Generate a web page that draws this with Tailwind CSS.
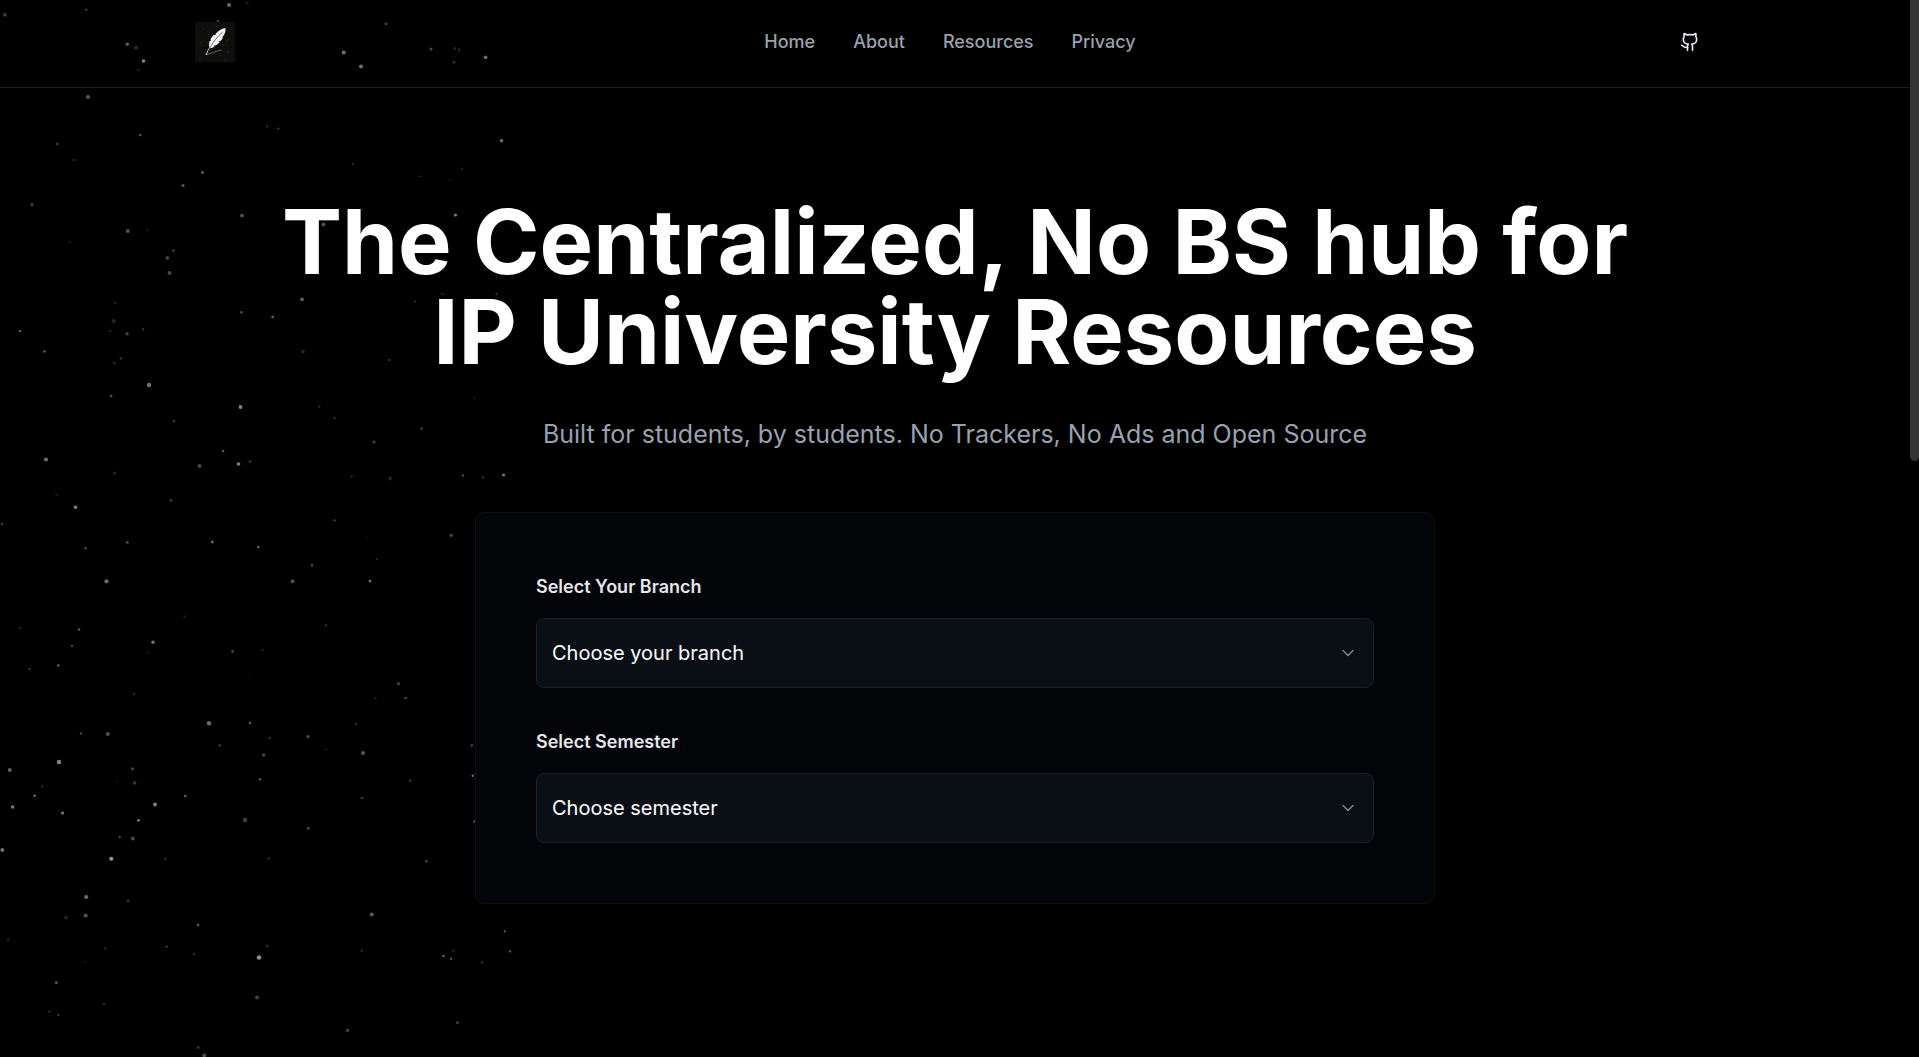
<!DOCTYPE html>
<html lang="en">
<head>
<meta charset="utf-8">
<meta name="viewport" content="width=device-width, initial-scale=1">
<title>IP University Resources</title>
<script src="https://cdn.jsdelivr.net/npm/@tailwindcss/browser@4"></script>
</head>
<body class="bg-black text-white font-['Inter',sans-serif] antialiased">
<div class="relative isolate min-h-screen overflow-hidden pr-[9px]">

  <!-- starfield -->
  <svg id="stars" class="absolute inset-0 -z-10 h-full w-full" aria-hidden="true" fill="#fff"></svg>

  <header class="h-[88px] border-b border-[#1b1c26] pb-[3px]">
    <div class="mx-auto flex h-full w-full max-w-[1520px] items-center justify-between">
      <a href="#" aria-label="Home page">
        <svg class="block size-10" viewBox="0 0 40 40" aria-hidden="true">
          <rect width="40" height="40" fill="#0e0e0d"/>
          <g fill="#2a2a2a"><circle cx="8" cy="7" r=".7"/><circle cx="33" cy="30" r=".8"/><circle cx="5" cy="36" r=".8"/><circle cx="19" cy="3" r=".5"/></g>
          <path d="M5 21.500l3-2M31 19l4-2.500M29 39.500l3-1.500" stroke="#2a2a2a" stroke-width=".8" fill="none"/>
          <path d="M30.500 6C26 6.800 22.800 9 20.500 12l.2 1.300-1.700-.5c-2 2.200-3.300 3.700-3.500 5.200l.8 1-1.500-.2C14 21.500 13.700 24 14.500 26c2.500.4 4-.6 5-1.700l-.6-1 1.600.3c1.800-1 3.200-2.200 4-3.600l-1-.8 1.800.1c1.400-1.400 2.300-2.900 2.700-4.300l-1-.6 1.500-.4C30 11.500 30.600 9 30.500 6z" fill="#f2f2f2"/>
          <path d="M27.500 10C22 15 18 20.500 14.500 26" stroke="#555" stroke-width=".8" fill="none"/>
          <path d="M14.500 26c-1.500 2-2.500 4-3.200 6.300" stroke="#bbb" stroke-width="1" fill="none"/>
          <path d="M11 32c5 .3 8-2.800 16-4" stroke="#777" stroke-width=".8" fill="none"/>
          <circle cx="11.500" cy="32.200" r="1" fill="#aaa"/>
        </svg>
      </a>
      <nav aria-label="Main" class="flex gap-[38px] text-[18px] leading-6 font-medium text-gray-400">
        <a href="#">Home</a>
        <a href="#">About</a>
        <a href="#">Resources</a>
        <a href="#">Privacy</a>
      </nav>
      <a href="#" aria-label="GitHub" class="flex h-11 w-[50px] items-center justify-center text-gray-200">
        <svg class="size-5" viewBox="0 0 24 24" fill="none" stroke="currentColor" stroke-width="2" stroke-linecap="round" stroke-linejoin="round" aria-hidden="true"><path d="M15 22v-4a4.800 4.800 0 0 0-1-3.500c3 0 6-2 6-5.500.08-1.250-.27-2.480-1-3.500.28-1.150.28-2.350 0-3.500 0 0-1 0-3 1.500-2.640-.5-5.360-.5-8 0C6 2 5 2 5 2c-.3 1.150-.3 2.350 0 3.500A5.403 5.403 0 0 0 4 9c0 3.500 3 5.500 6 5.500-.39.49-.68 1.050-.85 1.650-.17.6-.22 1.230-.15 1.850v4"/><path d="M9 18c-4.510 2-5-2-7-2"/></svg>
      </a>
    </div>
  </header>

  <main class="mx-auto flex max-w-[1400px] flex-col items-center pt-[109px] pb-20 text-center">
    <h1 class="text-[90px] leading-[90px] font-bold">The Centralized, No BS hub for<br>IP University Resources</h1>
    <p class="mt-10 text-[25px] leading-[35px] text-gray-400">Built for students, by students. No Trackers, No Ads and Open Source</p>

    <form class="mt-[60px] w-full max-w-[960px] rounded-[10px] border border-[#0c0f16] bg-[#030408] p-[60px] text-left">
      <div>
        <label for="branch" class="block text-[18px] leading-[27px] font-semibold text-gray-200">Select Your Branch</label>
        <div class="relative mt-[18px]">
          <select id="branch" class="block h-[70px] w-full appearance-none rounded-lg border border-[#18202a] bg-[#0a0e15] px-[15px] text-[20px] text-white">
            <option>Choose your branch</option>
          </select>
          <svg class="pointer-events-none absolute inset-y-0 right-4 my-auto size-5 text-[#84878b]" viewBox="0 0 24 24" fill="none" stroke="currentColor" stroke-width="1.700" stroke-linecap="round" stroke-linejoin="round" aria-hidden="true"><path d="m6 9 6 6 6-6"/></svg>
        </div>
      </div>
      <div class="mt-10">
        <label for="semester" class="block text-[18px] leading-[27px] font-semibold text-gray-200">Select Semester</label>
        <div class="relative mt-[18px]">
          <select id="semester" class="block h-[70px] w-full appearance-none rounded-lg border border-[#18202a] bg-[#0a0e15] px-[15px] text-[20px] text-white">
            <option>Choose semester</option>
          </select>
          <svg class="pointer-events-none absolute inset-y-0 right-4 my-auto size-5 text-[#84878b]" viewBox="0 0 24 24" fill="none" stroke="currentColor" stroke-width="1.700" stroke-linecap="round" stroke-linejoin="round" aria-hidden="true"><path d="m6 9 6 6 6-6"/></svg>
        </div>
      </div>
    </form>
  </main>

  <!-- scroll position indicator -->
  <div class="absolute top-0 right-0 h-[461px] w-[9px] rounded-b-full bg-[#333]" aria-hidden="true"></div>
</div>

<script>
// Each star: x, y, radius, opacity
const stars = [
[4.8,14.8,2,.22],[86.3,9.8,1.4,.22],[229,5,2,.4],[247.3,3.3,1.4,.12],[217.8,21,1.2,.28],[127.3,44.3,1.8,.35],[136,47.700,2,.17],[143.500,61,1.800,.5],[138.500,70.300,1.200,.12],[386,24,1.400,.25],[343.700,52.600,2,.42],[361,66.600,2,.45],[431,49,1.500,.28],[454.600,48.600,1.500,.15],[459,49.700,1.200,.18],[454,62.300,1.200,.22],[485.600,57.300,1.900,.42],
[88,97,2,.35],[57.300,144,1.400,.22],[140.300,135,1.200,.35],[73.800,160,1.300,.14],[267,126.500,1,.22],[278.500,128.700,1.100,.25],[501.500,140.700,1.800,.42],[353,164,1.200,.14],[462,168.700,1.200,.12],[419.500,176.300,1,.15],[450,180.500,1,.1],[202.500,172.500,1.300,.45],[183,185.500,1.600,.35],[32,204.600,1.600,.25],[242,215.600,1.900,.33],[455.500,215,1.500,.5],[323.500,224.500,1.900,.3],[127.800,231,2,.33],[147.300,229.800,1.300,.1],[69.500,242,1,.16],[173.600,250.700,1.600,.2],[167.300,258,1.900,.25],
[169.500,273,1.900,.28],[115.300,303,1,.2],[113.600,321,2,.16],[110.300,331,1.200,.14],[127,333.700,1.800,.25],[143,329.300,1.200,.2],[20,331,1.300,.35],[44.500,351.500,1.200,.4],[121,358.500,1.400,.15],[114.300,363,1.200,.2],[149,385,2.200,.45],[111,396,1.400,.28],[241.500,312.300,1.400,.3],[272.700,317,1.400,.35],[302,299.300,1.900,.38],[415,301.500,1.100,.2],[442.500,294,1.200,.15],[496.500,294,1.200,.2],[303,351.500,1.900,.14],[389.500,360,1.200,.2],[240.500,407,1.900,.5],[174,421,1.300,.22],[319.500,406.500,1,.25],[334.500,418,1.200,.2],[474.500,397.500,1.100,.15],[421.500,428.500,1.500,.22],[374,442,1.600,.25],[46,459.500,2.100,.42],[223,451,1.300,.35],[199.500,466,2.100,.28],[238.500,464,1.800,.5],[250,461.500,1.400,.18],[114.500,473,1.500,.16],[56.700,494.500,1.300,.1],[75.500,507.300,1.800,.5],[2,524,1.300,.22],[171,500.500,1.400,.22],[351.700,476.500,1.100,.22],[390,478.500,2,.14],[463,475.500,1.100,.35],[483,477.500,1.200,.18],[503.600,475,1.600,.45],[334.500,520.500,1.300,.22],[451.300,535.300,1.600,.28],[367.500,536.500,1,.08],
[85.500,548.300,1.300,.28],[127.300,542.300,1.500,.28],[212.300,542,1.400,.42],[258.300,547,1.300,.4],[312,565.300,1.200,.32],[377,559,1.200,.13],[106.500,581.300,2.100,.42],[292.500,581.300,2,.3],[370,581,1.500,.4],[184.500,616.600,1.100,.15],[326,625.300,1.200,.2],[20,628,1.200,.14],[79,629.500,1.300,.35],[72,646,1.200,.25],[153,642.300,1.700,.45],[148,652.600,1.200,.1],[232.600,651.500,1.400,.28],[262.500,650,1.300,.13],[58.300,665.500,1.200,.4],[29.300,669,1.100,.28],[134,694,1.200,.14],[250,677.300,1,.06],[398.500,683.800,1.700,.23],[405.700,698,1.200,.32],[375.300,698,1.200,.14],[209,723.300,2.200,.42],[250,723,1.400,.33],[356,724,1.200,.18],[269.500,738,1.200,.2],[308,736.500,1.600,.3],[325.500,749.500,1.100,.12],[219.700,745.500,1.200,.25],[363,753,1.900,.35],[263.700,755,1.700,.28],[81,733.500,1.200,.28],[107.800,734,2,.32],[59,762,2.200,.52],[9.800,770,1.900,.38],[132.600,768.700,1.500,.28],[134.600,783,1.800,.22],[117,781.500,1,.1],[42.300,786.500,1.200,.16],[260,779.300,1.300,.32],[410.300,780.500,1.600,.18],[471.700,745.500,1.700,.2],[472.800,775.700,1.200,.42],[34.700,795.700,1.200,.45],[185.300,796,1.300,.38],[155,804.500,1.900,.5],[362,798,1.300,.23],
[12.600,807,1.800,.48],[62.500,813,1.600,.48],[138.500,820.300,1.400,.5],[119.600,837,1.300,.28],[132.800,838.500,1.900,.28],[2.300,850,1.900,.45],[111.300,858.800,2,.6],[165.500,858.800,1.600,.13],[268.700,858.500,1.300,.14],[245,820,2.200,.25],[308.300,828.300,1.400,.3],[426.300,861.300,1.200,.3],[475,821.500,1.700,.3],[86.200,897,2.100,.42],[85.600,915.500,2,.32],[66,917.500,2,.13],[128,900.800,1.200,.25],[8.200,939.500,1.200,.15],[105.300,948.500,1.300,.14],[85,962,1,.1],[166.500,946.800,1.300,.22],[198,925,1.400,.32],[194,954,1.100,.25],[259,957.500,2.300,.55],[267.200,946,1.300,.2],[361.700,950.800,1.300,.14],[371.700,914.500,2,.35],[443.500,956,1.300,.38],[451,958.800,1.400,.28],[453.500,950.700,1.300,.14],[482,962.500,1.100,.25],[504.700,931.300,1.100,.4],[510,951.300,1.200,.32],[56.300,982.500,1.500,.32],[49.500,1011.500,1.200,.16],[58.200,1015,1.200,.2],[104,1004,1.200,.18],[257,997.500,2,.25],[347.500,1030.300,1.900,.23],[457.500,1022.700,1.400,.26],[198.300,1047.500,1.300,.24],[204.200,1055.500,1.900,.3]
];
const sky = document.getElementById('stars');
for (const [x, y, r, a] of stars) {
  const c = document.createElementNS('http://www.w3.org/2000/svg', 'circle');
  c.setAttribute('cx', x);
  c.setAttribute('cy', y);
  c.setAttribute('r', r);
  c.setAttribute('opacity', a);
  sky.append(c);
}
</script>
</body>
</html>
